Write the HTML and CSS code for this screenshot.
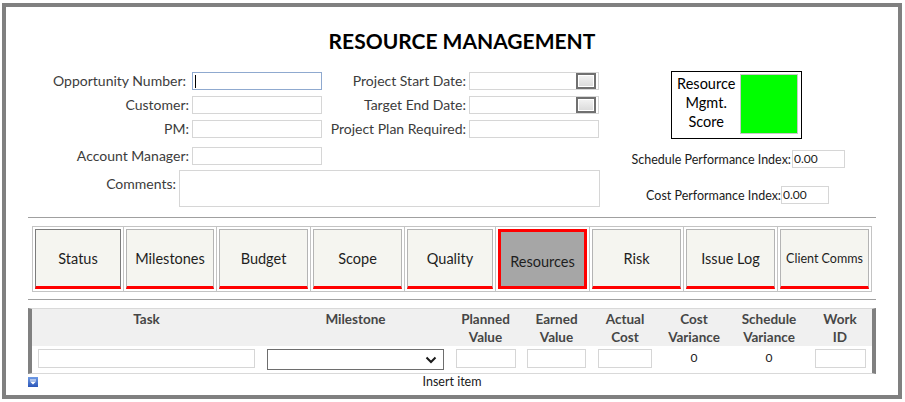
FILE: index.html
```html
<!DOCTYPE html>
<html lang="en">
<head>
<meta charset="utf-8">
<title>Resource Management</title>
<link rel="stylesheet" href="styles.css">
</head>
<body>
<div class="frame">
  <h1 class="title">RESOURCE MANAGEMENT</h1>

  <div class="top">
    <div class="form">
      <div class="grid">
        <label class="lbl lbl-first">Opportunity Number:</label>
        <div class="field focus"><span class="caret"></span></div>
        <label class="lbl">Project Start Date:</label>
        <div class="field date"><span class="dbtn"></span></div>

        <label class="lbl">Customer:</label>
        <div class="field"></div>
        <label class="lbl">Target End Date:</label>
        <div class="field date"><span class="dbtn"></span></div>

        <label class="lbl">PM:</label>
        <div class="field"></div>
        <label class="lbl">Project Plan Required:</label>
        <div class="field"></div>

        <label class="lbl">Account Manager:</label>
        <div class="field"></div>
      </div>
      <div class="comments">
        <label class="lbl">Comments:</label>
        <div class="field area"></div>
      </div>
    </div>

    <div class="side">
      <div class="score">
        <div class="score-text">Resource<br>Mgmt.<br>Score</div>
        <div class="score-swatch"></div>
      </div>
      <div class="idx spi">
        <span class="idx-lbl">Schedule Performance Index:</span>
        <div class="field num">0.00</div>
      </div>
      <div class="idx cpi">
        <span class="idx-lbl">Cost Performance Index:</span>
        <div class="field num">0.00</div>
      </div>
    </div>
  </div>

  <div class="rule rule-1"></div>

  <div class="tabs">
    <div class="cell"><div class="tab tab-focus">Status</div></div>
    <div class="cell"><div class="tab">Milestones</div></div>
    <div class="cell"><div class="tab">Budget</div></div>
    <div class="cell"><div class="tab">Scope</div></div>
    <div class="cell"><div class="tab">Quality</div></div>
    <div class="cell"><div class="tab tab-active">Resources</div></div>
    <div class="cell"><div class="tab">Risk</div></div>
    <div class="cell"><div class="tab">Issue Log</div></div>
    <div class="cell"><div class="tab tab-small">Client Comms</div></div>
  </div>

  <div class="rule rule-2"></div>

  <div class="table">
    <div class="thead">
      <div class="th">Task</div>
      <div class="th">Milestone</div>
      <div class="th">Planned<br>Value</div>
      <div class="th">Earned<br>Value</div>
      <div class="th">Actual<br>Cost</div>
      <div class="th">Cost<br>Variance</div>
      <div class="th">Schedule<br>Variance</div>
      <div class="th">Work<br>ID</div>
    </div>
    <div class="trow">
      <div class="td"><div class="field cell-in w-task"></div></div>
      <div class="td">
        <div class="select">
          <svg class="chev" width="12" height="8" viewBox="0 0 12 8"><path d="M1.5 1.5 L6 6 L10.5 1.5" fill="none" stroke="#1a1a1a" stroke-width="2"/></svg>
        </div>
      </div>
      <div class="td"><div class="field cell-in w-pv"></div></div>
      <div class="td"><div class="field cell-in w-ev"></div></div>
      <div class="td"><div class="field cell-in w-ac"></div></div>
      <div class="td val">0</div>
      <div class="td val">0</div>
      <div class="td"><div class="field cell-in w-id"></div></div>
    </div>
  </div>

  <div class="insert">
    <svg class="insert-icon" width="10" height="10" viewBox="0 0 10 10">
      <defs>
        <linearGradient id="ig" x1="0" y1="0" x2="0" y2="1">
          <stop offset="0" stop-color="#6f9be6"/>
          <stop offset="1" stop-color="#2b56b8"/>
        </linearGradient>
      </defs>
      <rect x="0" y="0" width="10" height="10" fill="url(#ig)"/>
      <rect x="2" y="2.5" width="6" height="1" fill="#ffffff"/>
      <path d="M2 4.5 H8 L5 7.5 Z" fill="#ffffff"/>
    </svg>
    <span class="insert-text">Insert item</span>
    <span></span>
  </div>
</div>
</body>
</html>
```

FILE: styles.css
```css
* { box-sizing: border-box; }

html, body {
  margin: 0;
  padding: 0;
  background: #ffffff;
}

body {
  font-family: Lato, "Open Sans", "Liberation Sans", sans-serif;
  color: #404040;
}

.frame {
  margin: 3px 3px 3px 2px;
  width: 900px;
  height: 396px;
  border: 4px solid #808080;
  background: #ffffff;
}

.title {
  margin: 20px 0 0 0;
  padding-left: 20px;
  height: 28px;
  line-height: 28px;
  font-size: 21px;
  font-weight: 700;
  text-align: center;
  color: #000000;
}

/* ---------- top section ---------- */
.top {
  display: flex;
  margin-top: 16px;
}

.form {
  width: 594px;
  padding-top: 1px;
}

.grid {
  display: grid;
  grid-template-columns: 186px 130px 147px 130px;
  grid-template-rows: 24px 24px 27px 18px;
  align-items: start;
}

.lbl {
  font-size: 14px;
  line-height: 18px;
  height: 18px;
  text-align: right;
  padding-right: 3px;
  white-space: nowrap;
  color: #3c3c3c;
}

.lbl-first { padding-right: 6px; }

.field {
  height: 18px;
  border: 1px solid #d6d6d6;
  background: #ffffff;
}

.field.focus {
  border-color: #8fa9cf;
  display: flex;
  align-items: center;
  padding-left: 2px;
}

.caret {
  width: 1px;
  height: 13px;
  background: #000000;
}

.field.date {
  display: flex;
  justify-content: flex-end;
  align-items: center;
  padding-right: 2px;
}

.dbtn {
  width: 20px;
  height: 16px;
  border: 2px solid #707070;
  box-shadow: inset 0 0 0 1px #ffffff;
  background: linear-gradient(#f3f3f3, #dadada);
}

.comments {
  display: flex;
  margin-top: 5px;
}

.comments .lbl {
  width: 173px;
  margin-top: 5px;
}

.field.area {
  width: 421px;
  height: 37px;
}

/* ---------- right side ---------- */
.side {
  flex: 1;
  display: flex;
  flex-direction: column;
}

.score {
  margin-left: 71px;
  width: 131px;
  height: 68px;
  border: 1px solid #000000;
  display: flex;
  padding: 2px 3px 5px 0;
}

.score-text {
  width: 69px;
  padding-top: 0;
  text-align: center;
  font-size: 14.5px;
  line-height: 19px;
  color: #000000;
}

.score-swatch {
  width: 58px;
  height: 60px;
  background: #00ff00;
  border: 1px solid #c8c8c8;
}

.idx {
  display: flex;
  justify-content: flex-end;
  align-items: flex-end;
  gap: 1px;
}

.spi { margin-top: 11px; margin-right: 53px; }
.cpi { margin-top: 18px; margin-right: 69px; gap: 0; }

.idx-lbl {
  font-size: 12.5px;
  line-height: 16px;
  color: #1a1a1a;
  white-space: nowrap;
}

.field.num {
  font-size: 12px;
  line-height: 14px;
  padding: 1px 0 0 1px;
  color: #1a1a1a;
}

.spi .field.num { width: 53px; }
.cpi .field.num { width: 48px; }

/* ---------- rules ---------- */
.rule {
  height: 1px;
  background: #a0a0a0;
  margin: 0 22px;
}

.rule-1 { margin-top: 10px; }
.rule-2 { margin-top: 7px; }

/* ---------- tabs ---------- */
.tabs {
  margin: 8px 26px 0 26px;
  display: grid;
  grid-template-columns: 90px 92px 93px 93px 90px 93px 93px 93px 1fr;
  gap: 1px;
  background: #c4c4c4;
  border: 1px solid #c4c4c4;
}

.cell {
  background: #ffffff;
  padding: 2px;
}

.tab {
  height: 60px;
  background: #f5f5f0;
  border: 1px solid #b4b4b4;
  border-bottom: 3px solid #ff0000;
  display: flex;
  align-items: center;
  justify-content: center;
  font-size: 14.5px;
  color: #1e1e1e;
  white-space: nowrap;
}

.tab-focus {
  border-color: #7c7c7c;
  border-bottom-color: #ff0000;
}

.tab-active {
  background: #a6a6a6;
  border: 3px solid #ff0000;
  padding-top: 5px;
}

.tab-small { font-size: 12.5px; }

/* ---------- table ---------- */
.table {
  margin: 8px 22px 0 22px;
  border-left: 4px solid #808080;
  border-right: 4px solid #808080;
  border-top: 1px solid #d9d9d9;
  border-bottom: 1px solid #d9d9d9;
}

.thead, .trow {
  display: grid;
  grid-template-columns: 229px 189px 71px 71px 66px 72px 78px 64px;
}

.thead {
  height: 37px;
  background: #f0f0f0;
}

.th {
  padding-top: 1px;
  text-align: center;
  font-size: 13.5px;
  font-weight: 700;
  line-height: 18px;
  color: #464646;
}

.trow {
  height: 27px;
  background: #ffffff;
  align-items: start;
}

.td {
  display: flex;
  justify-content: center;
  padding-top: 3px;
}

.cell-in { height: 19px; }
.w-task { width: 217px; }
.w-pv { width: 60px; }
.w-ev { width: 59px; }
.w-ac { width: 54px; }
.w-id { width: 51px; }

.select {
  width: 177px;
  height: 21px;
  border: 1px solid #6e6e6e;
  background: #ffffff;
  display: flex;
  justify-content: flex-end;
  align-items: center;
  padding-right: 6px;
}

.td.val {
  padding-top: 5px;
  font-size: 12px;
  line-height: 14px;
  color: #1a1a1a;
}

/* ---------- insert row ---------- */
.insert {
  margin: 0 22px;
  height: 16px;
  display: grid;
  grid-template-columns: 1fr auto 1fr;
  align-items: center;
}

.insert-icon { display: block; }

.insert-text {
  font-size: 12.5px;
  line-height: 14px;
  color: #1a1a1a;
}
```
